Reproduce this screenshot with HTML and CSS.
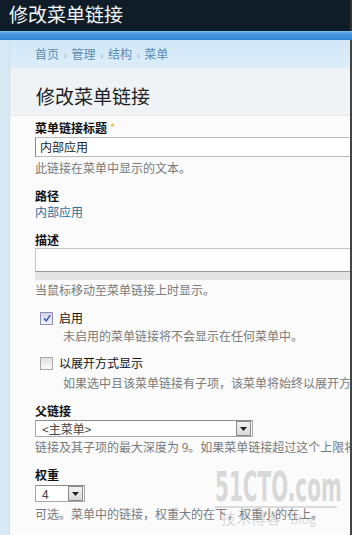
FILE: index.html
```html
<!DOCTYPE html>
<html lang="zh-CN">
<head>
  <meta charset="UTF-8">
  <title>修改菜单链接</title>
  <link rel="stylesheet" href="styles.css">
</head>
<body>
  <div class="site-header">
    <h1 class="site-title">修改菜单链接</h1>
  </div>
  <div class="band"></div>

  <div class="page">
    <div class="breadcrumb">
      <a href="#">首页</a> <span class="sep">›</span> <a href="#">管理</a> <span class="sep">›</span> <a href="#">结构</a> <span class="sep">›</span> <a href="#">菜单</a>
    </div>

    <div class="title-area">
      <h2>修改菜单链接</h2>
    </div>

    <form class="form">
      <div class="item">
        <label class="lbl">菜单链接标题 <span class="req">*</span></label>
        <div class="text-input">内部应用</div>
        <div class="help">此链接在菜单中显示的文本。</div>
      </div>

      <div class="item">
        <label class="lbl">路径</label>
        <a class="path" href="#">内部应用</a>
      </div>

      <div class="item">
        <label class="lbl">描述</label>
        <div class="textarea"></div>
        <div class="grippie"></div>
        <div class="help tight">当鼠标移动至菜单链接上时显示。</div>
      </div>

      <div class="item check">
        <div class="check-row"><span class="box checked"><svg viewBox="0 0 10 10" width="10" height="10"><path d="M2 5.5 L4.2 7.8 L8.3 2.2" fill="none" stroke="#3b4fb0" stroke-width="1.4"/></svg></span> 启用</div>
        <div class="help indent">未启用的菜单链接将不会显示在任何菜单中。</div>
      </div>

      <div class="item check second">
        <div class="check-row"><span class="box"></span> 以展开方式显示</div>
        <div class="help indent nowrap">如果选中且该菜单链接有子项，该菜单将始终以展开方式显示。</div>
      </div>

      <div class="item">
        <label class="lbl">父链接</label>
        <div class="select wide"><span>&lt;主菜单&gt;</span><span class="arrow"><svg viewBox="0 0 7 4" width="7" height="4"><path d="M0 0 H7 L3.5 4 Z" fill="#222"/></svg></span></div>
        <div class="help tight nowrap">链接及其子项的最大深度为 9。如果菜单链接超过这个上限将无法保存。</div>
      </div>

      <div class="item">
        <label class="lbl">权重</label>
        <div class="select small"><span>4</span><span class="arrow"><svg viewBox="0 0 7 4" width="7" height="4"><path d="M0 0 H7 L3.5 4 Z" fill="#222"/></svg></span></div>
        <div class="help">可选。菜单中的链接，权重大的在下，权重小的在上。</div>
      </div>
    </form>
  </div>

  <div class="watermark">
    <div class="wm-big">51CTO.com</div>
    <div class="wm-small">技术博客 <span>Blog</span></div>
  </div>
</body>
</html>
```

FILE: styles.css
```css
body {
  margin: 0;
  width: 352px;
  height: 535px;
  overflow: hidden;
  position: relative;
  background-color: #d8eaf6;
  font-family: "Noto Sans CJK SC", "DejaVu Sans", sans-serif;
  font-size: 12px;
  color: #222;
}

/* dark top header */
.site-header {
  height: 31px;
  background-color: #0f1d29;
  border-right: 2px solid #333;
}
.site-title {
  margin: 0;
  padding-left: 9px;
  font-size: 19px;
  font-weight: normal;
  line-height: 28px;
  color: #f4f6f8;
}
.band {
  height: 9px;
  background: linear-gradient(#8cc4ea 0, #4a9ee2 2px, #3284d2 100%);
}

/* main panel */
.page {
  margin-left: 9px;
  border-left: 1px solid #c9dfee;
  border-right: 2px solid #444;
  background-color: #fbfbfb;
  height: 495px;
}
.breadcrumb {
  height: 27px;
  padding-left: 25px;
  line-height: 27px;
  background: linear-gradient(#d2e7f7, #dcedf9);
  border-bottom: 1px solid #e2ecf2;
  color: #8fa9bc;
  white-space: nowrap;
}
.breadcrumb a {
  color: #5b8db4;
  text-decoration: none;
}
.breadcrumb .sep {
  font-size: 10px;
  margin: 0 2px;
}
.title-area {
  height: 47px;
  padding-left: 26px;
  background-color: #eff3f6;
  border-bottom: 1px solid #e3e8ec;
}
.title-area h2 {
  margin: 0;
  padding-top: 15px;
  font-size: 19px;
  font-weight: normal;
  line-height: 26px;
  color: #1e1e1e;
}

/* form */
.form {
  padding: 4px 0 0 25px;
  overflow: hidden;
}
.item {
  margin-bottom: 12px;
}
.lbl {
  display: block;
  font-weight: bold;
  line-height: 16px;
  color: #111;
}
.req {
  color: #e7c24f;
  font-weight: normal;
}
.text-input {
  margin-top: 1px;
  height: 18px;
  width: 330px;
  padding-left: 4px;
  border: 1px solid #b9b9b9;
  border-left-color: #8a8a8a;
  background-color: #fff;
  line-height: 18px;
}
.help {
  margin-top: 3px;
  line-height: 16px;
  color: #7a7a7a;
}
.help.tight {
  margin-top: 2px;
}
.nowrap {
  white-space: nowrap;
}
.indent {
  padding-left: 23px;
}
.path {
  display: block;
  line-height: 16px;
  color: #2e6f9e;
  text-decoration: none;
}
.textarea {
  height: 22px;
  width: 330px;
  border: 1px solid #c4c4c4;
  border-bottom-color: #999;
  background-color: #fdfdfd;
}
.grippie {
  height: 8px;
  width: 332px;
  background-color: #e4e4e4;
}

/* checkboxes */
.check {
  padding-left: 5px;
  margin-bottom: 11px;
}
.check .help {
  margin-top: 2px;
}
.check.second .help {
  margin-top: 4px;
}
.check.second {
  margin-bottom: 12px;
}
.check-row {
  display: flex;
  align-items: center;
  gap: 6px;
  line-height: 16px;
  color: #111;
}
.box {
  width: 11px;
  height: 11px;
  border: 1px solid #a9a9a9;
  background: linear-gradient(#e0e0e0, #fafafa);
  display: flex;
  align-items: center;
  justify-content: center;
}
.box.checked {
  border-color: #8e8fb4;
  background: linear-gradient(#d4d4ea, #f3f3fb);
}

/* selects */
.select {
  display: flex;
  justify-content: space-between;
  align-items: center;
  margin-top: 1px;
  height: 15px;
  border: 1px solid #a8a8a8;
  border-top-color: #8c8c8c;
  background-color: #fff;
  padding-left: 6px;
  color: #444;
  line-height: 15px;
}
.select.wide {
  width: 210px;
}
.select.small {
  margin-top: 2px;
  width: 42px;
}
.select.small + .help {
  margin-top: 4px;
}
.arrow {
  width: 13px;
  height: 13px;
  margin-right: 1px;
  border: 1px solid #8a8a8a;
  background: linear-gradient(#f4f4f4, #d8d8d8);
  display: flex;
  align-items: center;
  justify-content: center;
}

/* faint watermark lying over the content */
.watermark {
  position: absolute;
  left: 215px;
  top: 466px;
  width: 122px;
  color: rgba(160, 160, 160, 0.4);
  pointer-events: none;
}
.wm-big {
  font-family: "DejaVu Sans", sans-serif;
  font-size: 40px;
  font-weight: bold;
  line-height: 42px;
  height: 40px;
  white-space: nowrap;
  transform: scaleX(0.5);
  transform-origin: left top;
}
.wm-small {
  border-top: 2px solid rgba(160, 160, 160, 0.35);
  font-size: 15px;
  line-height: 20px;
  padding-left: 6px;
  white-space: nowrap;
}
.wm-small span {
  font-size: 12px;
  margin-left: 6px;
}
```
